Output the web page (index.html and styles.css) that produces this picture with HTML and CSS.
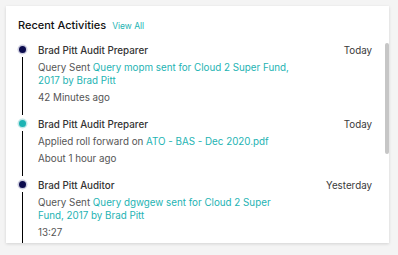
FILE: index.html
```html
<!DOCTYPE html>
<html lang="en">

<head>
    <meta charset="UTF-8">
    <meta name="viewport" content="width=device-width, initial-scale=1.0">
    <title>Recent Activities</title>
    <link rel="stylesheet" href="styles.css">
</head>

<body>
    <div class="card">
        <div class="card-header">
            <h2>Recent Activities</h2>
            <a href="#" class="view-all">View All</a>
        </div>

        <div class="card-body">
            <div class="activity-list">
                <div class="activity">
                    <div class="marker">
                        <span class="dot"></span>
                        <span class="line"></span>
                    </div>
                    <div class="activity-body">
                        <div class="activity-title">Brad Pitt Audit Preparer</div>
                        <div class="activity-text">Query Sent <a href="#">Query mopm sent for Cloud 2 Super Fund, 2017 by Brad Pitt</a></div>
                        <div class="activity-time">42 Minutes ago</div>
                    </div>
                    <div class="activity-date">Today</div>
                </div>

                <div class="activity">
                    <div class="marker">
                        <span class="dot dot-teal"></span>
                        <span class="line"></span>
                    </div>
                    <div class="activity-body">
                        <div class="activity-title">Brad Pitt Audit Preparer</div>
                        <div class="activity-text">Applied roll forward on <a href="#">ATO - BAS - Dec 2020.pdf</a></div>
                        <div class="activity-time">About 1 hour ago</div>
                    </div>
                    <div class="activity-date">Today</div>
                </div>

                <div class="activity">
                    <div class="marker">
                        <span class="dot"></span>
                        <span class="line"></span>
                    </div>
                    <div class="activity-body">
                        <div class="activity-title">Brad Pitt Auditor</div>
                        <div class="activity-text">Query Sent <a href="#">Query dgwgew sent for Cloud 2 Super Fund, 2017 by Brad Pitt</a></div>
                        <div class="activity-time">13:27</div>
                    </div>
                    <div class="activity-date">Yesterday</div>
                </div>
            </div>

            <!-- scroll position indicator -->
            <div class="scroll-track">
                <div class="scroll-thumb"></div>
            </div>
        </div>
    </div>
</body>

</html>
```

FILE: styles.css
```css
:root {
    --teal: #1db3b3;
    --navy: #0c0c4e;
    --text-dark: #333333;
    --text-muted: #555555;
}

* {
    box-sizing: border-box;
    margin: 0;
    padding: 0;
}

body {
    font-family: "Inter", "Noto Sans", sans-serif;
    background: #f4f4f4;
    padding: 6px 9px 12px 6px;
    color: var(--text-dark);
}

.card {
    background: #ffffff;
    height: 237px;
    box-shadow: 0 1px 3px rgba(0, 0, 0, 0.14);
    display: flex;
    flex-direction: column;
    overflow: hidden;
}

.card-header {
    display: flex;
    align-items: baseline;
    gap: 6px;
    padding: 11px 12px 0;
    height: 37px;
    flex-shrink: 0;
}

.card-header h2 {
    font-size: 11px;
    font-weight: 500;
    color: #111111;
    line-height: 16px;
}

.view-all {
    font-size: 8.5px;
    color: var(--teal);
    text-decoration: none;
}

.card-body {
    flex: 1;
    display: flex;
    min-height: 0;
}

.activity-list {
    flex: 1;
    overflow: hidden;
    padding: 1px 13px 0 11px;
}

.scroll-track {
    width: 4px;
    flex-shrink: 0;
}

.scroll-thumb {
    height: 111px;
    background: #c6c6c6;
    border-radius: 2px;
}

.activity {
    display: grid;
    grid-template-columns: 11px 254px 1fr;
    column-gap: 10px;
    font-size: 9.8px;
    line-height: 13px;
}

.marker {
    display: flex;
    flex-direction: column;
    align-items: center;
    padding-top: 2px;
}

.dot {
    width: 7px;
    height: 7px;
    border-radius: 50%;
    background: var(--navy);
    box-shadow: 0 0 0 1.5px #cdcddf;
    flex-shrink: 0;
}

.dot-teal {
    background: var(--teal);
    box-shadow: 0 0 0 1.5px #c0e8e8;
}

.line {
    flex: 1;
    width: 1px;
    background: #000000;
    margin: 4px 0 3px;
}

.activity-body {
    display: flex;
    flex-direction: column;
    gap: 4px;
    padding-bottom: 14px;
}

.activity-title {
    font-weight: 500;
}

.activity-text {
    color: var(--text-muted);
}

.activity-text a {
    color: var(--teal);
    text-decoration: none;
}

.activity-time {
    color: var(--text-muted);
}

.activity-date {
    text-align: right;
    color: #3a3a3a;
}
```
